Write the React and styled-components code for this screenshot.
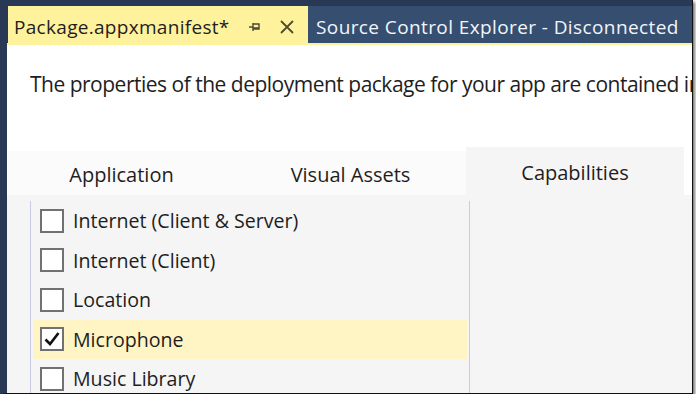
import React from 'react';
import styled, { createGlobalStyle } from 'styled-components';

const GlobalStyle = createGlobalStyle`
  body {
    margin: 0;
    background: #fff;
    font-family: "Open Sans", "Noto Sans", sans-serif;
  }
`;

const Window = styled.div`
  width: 685px;
  height: 393px;
  display: flex;
  flex-direction: column;
  background: #fff;
  border-left: 7px solid #293955;
  border-right: 1px solid #111;
  border-bottom: 1px solid #111;
  box-shadow: 2px 2px 3px rgba(0, 0, 0, 0.55);
  overflow: hidden;
`;

const TabWell = styled.div`
  flex-shrink: 0;
  display: flex;
  align-items: stretch;
  height: 37px;
  padding-top: 6px;
  margin-left: -7px;
  padding-left: 8px;
  background: #293955;
  border-bottom: 2px solid #fff29d;
`;

const DocTab = styled.div`
  display: flex;
  align-items: center;
  padding: ${p => (p.active ? '4px 0 0 6px' : '4px 0 0 8px')};
  width: ${p => (p.active ? '294px' : 'auto')};
  flex: ${p => (p.active ? 'none' : '1')};
  background: ${p => (p.active ? '#fff29d' : '#364e6f')};
  color: ${p => (p.active ? '#1e1e1e' : '#f2f5fa')};
  font-size: 19px;
  letter-spacing: ${p => (p.active ? '0.3px' : '0.4px')};
  white-space: nowrap;
  overflow: hidden;
`;

const TabTitle = styled.span`
  flex: 1;
`;

const TabButton = styled.span`
  display: flex;
  align-items: center;
  justify-content: center;
  width: 22px;
  height: 22px;
  margin-right: ${p => p.gap || 0}px;
`;

const Content = styled.div`
  flex: 1;
  min-height: 0;
  display: flex;
  flex-direction: column;
  overflow: hidden;
`;

const Description = styled.p`
  flex-shrink: 0;
  margin: 25px 0 0 23px;
  height: 29px;
  line-height: 29px;
  font-size: 21px;
  letter-spacing: -0.5px;
  color: #1e1e1e;
  white-space: nowrap;
  overflow: hidden;
`;

const PageTabs = styled.div`
  flex-shrink: 0;
  display: flex;
  margin-top: 48px;
  padding-left: 1px;
  align-items: flex-end;
`;

const PageTab = styled.div`
  width: ${p => p.w}px;
  height: ${p => (p.active ? 48 : 44)}px;
  box-sizing: border-box;
  padding-top: 3px;
  display: flex;
  align-items: center;
  justify-content: center;
  background: ${p => (p.active ? '#f5f5f5' : '#fbfbfb')};
  font-size: 20px;
  color: #1e1e1e;
`;

const Panel = styled.div`
  flex: 1;
  min-height: 0;
  background: #f5f5f5;
  padding: 6px 0 0 23px;
`;

const List = styled.div`
  width: 434px;
  height: 100%;
  padding: 0 2px;
  overflow: hidden;
  border-left: 1px solid #c9cce0;
  border-right: 1px solid #c9cce0;
`;

const Row = styled.div`
  display: flex;
  align-items: center;
  height: 39.5px;
  padding-left: 7px;
  background: ${p => (p.selected ? '#fff4c4' : 'transparent')};
  font-size: 19.6px;
  color: #1e1e1e;
  white-space: nowrap;
`;

const Box = styled.span`
  display: flex;
  align-items: center;
  justify-content: center;
  width: 20px;
  height: 20px;
  margin-right: 9px;
  background: #fff;
  border: 2px solid #717171;
`;

const PinIcon = () => (
  <svg width="14" height="14" viewBox="0 0 14 14">
    <path d="M1 7H5M5 3V11M5 4H11V9H5M5 8H11" fill="none" stroke="#4f4a30" strokeWidth="1.4" />
  </svg>
);

const CloseIcon = () => (
  <svg width="16" height="16" viewBox="0 0 16 16">
    <path d="M2 2L14 14M14 2L2 14" stroke="#4f4a30" strokeWidth="1.8" />
  </svg>
);

const Check = () => (
  <svg width="18" height="18" viewBox="0 0 18 18">
    <path d="M2.5 9.5L7 14L15.5 3" fill="none" stroke="#111" strokeWidth="2.6" />
  </svg>
);

const capabilities = [
  { label: 'Internet (Client & Server)', checked: false },
  { label: 'Internet (Client)', checked: false },
  { label: 'Location', checked: false },
  { label: 'Microphone', checked: true },
  { label: 'Music Library', checked: false },
];

const pages = [
  { label: 'Application', w: 227 },
  { label: 'Visual Assets', w: 231 },
  { label: 'Capabilities', w: 218, active: true },
];

export default function App() {
  return (
    <>
      <GlobalStyle />
      <Window>
        <TabWell>
          <DocTab active>
            <TabTitle>Package.appxmanifest*</TabTitle>
            <TabButton gap={10}><PinIcon /></TabButton>
            <TabButton gap={10}><CloseIcon /></TabButton>
          </DocTab>
          <DocTab>Source Control Explorer - Disconnected</DocTab>
        </TabWell>
        <Content>
          <Description>
            The properties of the deployment package for your app are contained in the app manifest file.
          </Description>
          <PageTabs>
            {pages.map(p => (
              <PageTab key={p.label} w={p.w} active={p.active}>{p.label}</PageTab>
            ))}
          </PageTabs>
          <Panel>
            <List>
              {capabilities.map(c => (
                <Row key={c.label} selected={c.checked}>
                  <Box>{c.checked && <Check />}</Box>
                  {c.label}
                </Row>
              ))}
            </List>
          </Panel>
        </Content>
      </Window>
    </>
  );
}
